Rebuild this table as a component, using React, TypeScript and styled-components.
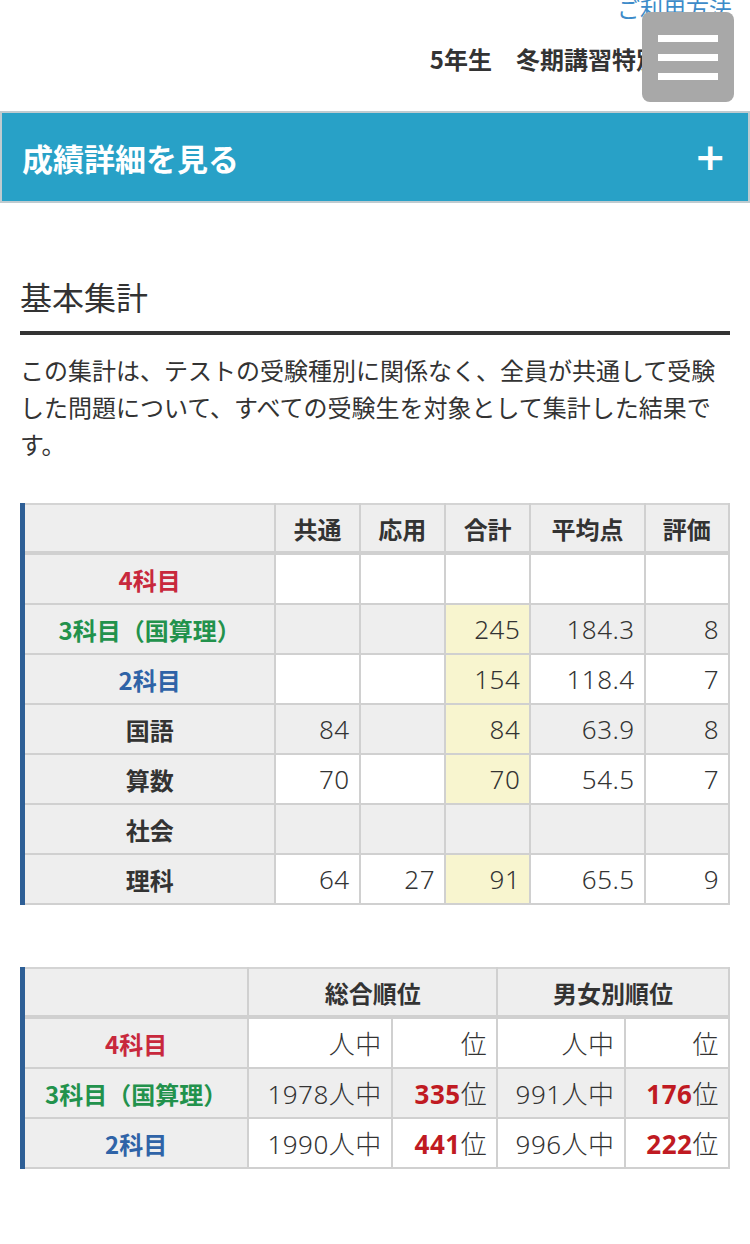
import React from 'react'
import styled, { createGlobalStyle } from 'styled-components'

const GlobalStyle = createGlobalStyle`
  html, body {
    margin: 0;
    padding: 0;
    background: #fff;
  }
  body {
    font-family: "Noto Sans CJK JP", "Noto Sans", sans-serif;
    color: #333;
  }
`

type Row = {
  label: string
  color?: string
  kyotsu?: string
  oyo?: string
  total?: string
  avg?: string
  grade?: string
}

const basicRows: Row[] = [
  { label: '4科目', color: '#c8283c' },
  { label: '3科目（国算理）', color: '#22924c', total: '245', avg: '184.3', grade: '8' },
  { label: '2科目', color: '#2f63a7', total: '154', avg: '118.4', grade: '7' },
  { label: '国語', kyotsu: '84', total: '84', avg: '63.9', grade: '8' },
  { label: '算数', kyotsu: '70', total: '70', avg: '54.5', grade: '7' },
  { label: '社会' },
  { label: '理科', kyotsu: '64', oyo: '27', total: '91', avg: '65.5', grade: '9' },
]

type RankRow = {
  label: string
  color: string
  total?: string
  rank?: string
  gTotal?: string
  gRank?: string
}

const rankRows: RankRow[] = [
  { label: '4科目', color: '#c8283c' },
  { label: '3科目（国算理）', color: '#22924c', total: '1978', rank: '335', gTotal: '991', gRank: '176' },
  { label: '2科目', color: '#2f63a7', total: '1990', rank: '441', gTotal: '996', gRank: '222' },
]

const App = () => {
  return (
    <Page>
      <GlobalStyle />
      <Header>
        <HelpLink>ご利用方法</HelpLink>
        <CourseTitle>5年生　冬期講習特別テスト</CourseTitle>
        <MenuButton aria-label="menu">
          <MenuLine />
          <MenuLine />
          <MenuLine />
        </MenuButton>
      </Header>

      <DetailBar>
        <DetailLabel>成績詳細を見る</DetailLabel>
        <PlusIcon>+</PlusIcon>
      </DetailBar>

      <Content>
        <SectionTitle>基本集計</SectionTitle>
        <Lead>
          この集計は、テストの受験種別に関係なく、全員が共通して受験した問題について、すべての受験生を対象として集計した結果です。
        </Lead>

        <Table>
          <colgroup>
            <col style={{ width: 252 }} />
            <col style={{ width: 84 }} />
            <col style={{ width: 85 }} />
            <col style={{ width: 85 }} />
            <col style={{ width: 114 }} />
            <col style={{ width: 84 }} />
          </colgroup>
          <thead>
            <tr>
              <HeadCell />
              <HeadCell>共通</HeadCell>
              <HeadCell>応用</HeadCell>
              <HeadCell>合計</HeadCell>
              <HeadCell>平均点</HeadCell>
              <HeadCell>評価</HeadCell>
            </tr>
          </thead>
          <tbody>
            {basicRows.map((r, i) => {
              const shade = i % 2 === 1
              return (
                <tr key={r.label}>
                  <LabelCell $color={r.color}>{r.label}</LabelCell>
                  <NumCell $shade={shade}>{r.kyotsu}</NumCell>
                  <NumCell $shade={shade}>{r.oyo}</NumCell>
                  <NumCell $shade={shade} $highlight={!!r.total}>{r.total}</NumCell>
                  <NumCell $shade={shade}>{r.avg}</NumCell>
                  <NumCell $shade={shade}>{r.grade}</NumCell>
                </tr>
              )
            })}
          </tbody>
        </Table>

        <RankTable>
          <colgroup>
            <col style={{ width: 225 }} />
            <col style={{ width: 143 }} />
            <col style={{ width: 105 }} />
            <col style={{ width: 127 }} />
            <col style={{ width: 104 }} />
          </colgroup>
          <thead>
            <tr>
              <HeadCell />
              <HeadCell colSpan={2}>総合順位</HeadCell>
              <HeadCell colSpan={2}>男女別順位</HeadCell>
            </tr>
          </thead>
          <tbody>
            {rankRows.map((r, i) => {
              const shade = i % 2 === 1
              return (
                <tr key={r.label}>
                  <LabelCell $color={r.color}>{r.label}</LabelCell>
                  <NumCell $shade={shade}>{r.total}人中</NumCell>
                  <NumCell $shade={shade}>
                    <RankNum>{r.rank}</RankNum>位
                  </NumCell>
                  <NumCell $shade={shade}>{r.gTotal}人中</NumCell>
                  <NumCell $shade={shade}>
                    <RankNum>{r.gRank}</RankNum>位
                  </NumCell>
                </tr>
              )
            })}
          </tbody>
        </RankTable>
      </Content>
    </Page>
  )
}

export default App

const Page = styled.div`
  width: 750px;
  min-height: 1244px;
  overflow: hidden;
  background: #fff;
`

const Header = styled.header`
  position: relative;
  height: 111px;
  display: flex;
  flex-direction: column;
  align-items: flex-end;
  padding-right: 18px;
  box-sizing: border-box;
`

const HelpLink = styled.a`
  margin-top: -9px;
  font-size: 23px;
  line-height: 34px;
  color: #3d8bc9;
`

const CourseTitle = styled.h1`
  margin: 16px 0 0;
  font-size: 24px;
  font-weight: 700;
  line-height: 36px;
  color: #333;
`

const MenuButton = styled.div`
  position: absolute;
  top: 12px;
  right: 16px;
  width: 92px;
  height: 90px;
  border-radius: 8px;
  background: #a8a8a8;
  display: flex;
  flex-direction: column;
  justify-content: center;
  align-items: center;
  gap: 12px;
`

const MenuLine = styled.span`
  display: block;
  width: 60px;
  height: 7px;
  background: #fff;
`

const DetailBar = styled.div`
  height: 92px;
  box-sizing: border-box;
  border: 2px solid #bfcbd0;
  background: #28a1c7;
  display: flex;
  align-items: center;
  justify-content: space-between;
  padding: 0 22px 0 20px;
`

const DetailLabel = styled.span`
  color: #fff;
  font-size: 31px;
  font-weight: 700;
`

const PlusIcon = styled.span`
  color: #fff;
  font-family: "DejaVu Sans", sans-serif;
  font-size: 38px;
  font-weight: 700;
  line-height: 1;
`

const Content = styled.main`
  padding: 0 20px 60px;
`

const SectionTitle = styled.h2`
  margin: 72px 0 0;
  padding-bottom: 14px;
  border-bottom: 4px solid #333;
  font-size: 32px;
  font-weight: 400;
  line-height: 42px;
  color: #333;
`

const Lead = styled.p`
  margin: 16px 0 0;
  font-size: 24px;
  line-height: 37px;
  color: #333;
`

const Table = styled.table`
  margin-top: 41px;
  width: 710px;
  table-layout: fixed;
  border-collapse: collapse;
  border-left: 5px solid #2e5f96;
  border-top: 2px solid #d4d4d4;

  thead tr {
    border-bottom: 4px solid #d0d0d0;
  }
`

const RankTable = styled(Table)`
  margin-top: 62px;
`

const HeadCell = styled.th`
  height: 46px;
  background: #eeeeee;
  border: 2px solid #d0d0d0;
  border-top: none;
  font-size: 24px;
  font-weight: 700;
  color: #333;
  text-align: center;
  padding: 0;
`

const LabelCell = styled.th<{ $color?: string }>`
  height: 48px;
  background: #eeeeee;
  border: 2px solid #d0d0d0;
  font-size: 24px;
  font-weight: 700;
  color: ${(p) => p.$color || '#333'};
  text-align: center;
  padding: 0;
  white-space: nowrap;
`

const NumCell = styled.td<{ $shade?: boolean; $highlight?: boolean }>`
  height: 48px;
  background: ${(p) => (p.$highlight ? '#f8f5cf' : p.$shade ? '#eeeeee' : '#fff')};
  border: 2px solid #d0d0d0;
  font-family: "Noto Sans", "Noto Sans CJK JP", sans-serif;
  font-size: 26px;
  font-weight: 300;
  letter-spacing: 0.5px;
  color: #333;
  text-align: right;
  padding: 0 9px 0 0;
  white-space: nowrap;
`

const RankNum = styled.span`
  color: #c01a22;
  font-weight: 700;
`
